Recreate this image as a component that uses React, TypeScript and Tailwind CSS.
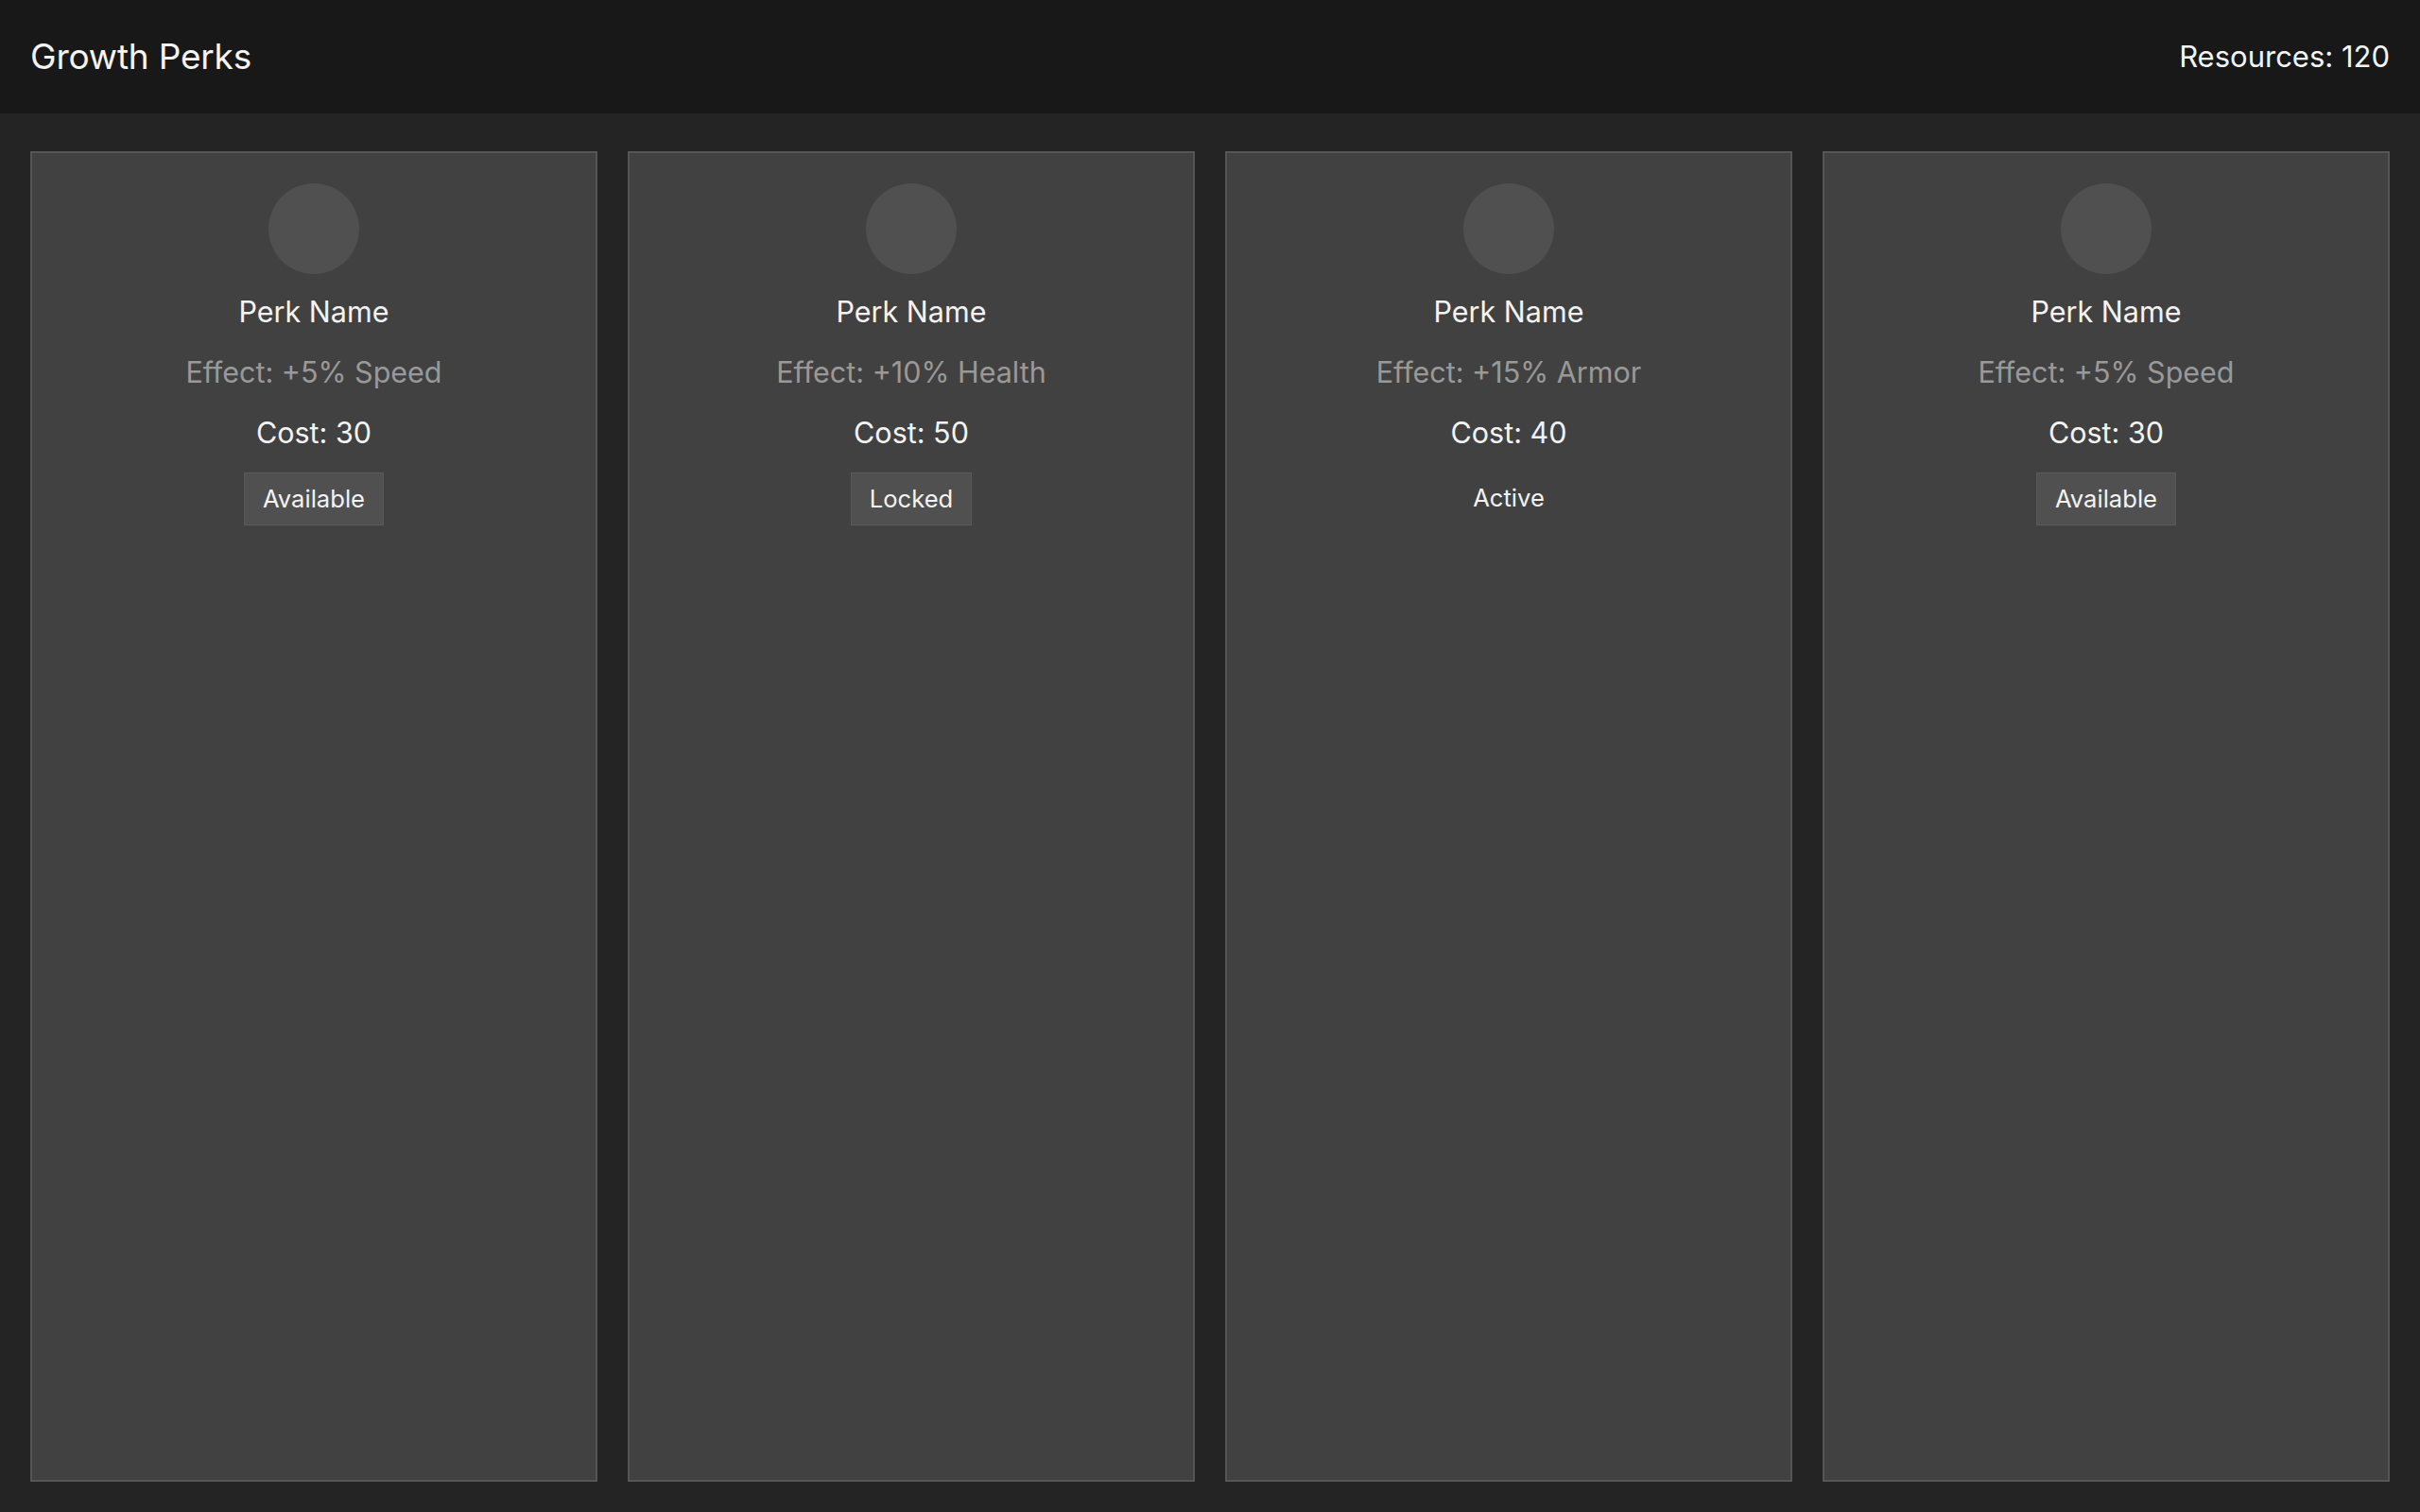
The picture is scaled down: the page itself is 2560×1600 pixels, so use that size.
import React from 'react'

type Perk = {
  effect: string
  cost: number
  status: 'Available' | 'Locked' | 'Active'
}

const perks: Perk[] = [
  { effect: '+5% Speed', cost: 30, status: 'Available' },
  { effect: '+10% Health', cost: 50, status: 'Locked' },
  { effect: '+15% Armor', cost: 40, status: 'Active' },
  { effect: '+5% Speed', cost: 30, status: 'Available' },
]

const PerkCard = ({ perk }: { perk: Perk }) => {
  return (
    <div className="flex-1 flex flex-col items-center bg-[#414141] border-2 border-[#555555] pt-8 px-8 text-center">
      <div className="w-24 h-24 rounded-full bg-[#505050] mb-[18px]" />
      <div className="flex flex-col items-center gap-[20px]">
        <h2 className="text-[30.5px] leading-[44px] text-[#f3f3f3]">Perk Name</h2>
        <p className="text-[30.5px] leading-[44px] text-[#999999]">Effect: {perk.effect}</p>
        <p className="text-[30.5px] leading-[44px] text-[#f3f3f3]">Cost: {perk.cost}</p>
        <span
          className={
            'text-[25.6px] leading-[1.5] text-[#f3f3f3] px-[19px] py-[8px] ' +
            (perk.status === 'Active' ? '' : 'bg-[#505050] border border-[#5a5a5a]')
          }
        >
          {perk.status}
        </span>
      </div>
    </div>
  )
}

const App = () => {
  return (
    <div className="min-h-screen flex flex-col bg-[#242424] font-['Inter',_'Noto_Sans',_sans-serif]">
      <header className="h-[120px] shrink-0 flex items-center justify-between px-8 bg-[#181818]">
        <h1 className="text-[37px] text-[#f5f5f5] tracking-[-0.2px]">Growth Perks</h1>
        <div className="text-[31px] text-[#f5f5f5]">Resources: 120</div>
      </header>
      <main className="flex-1 flex gap-8 px-8 pt-10 pb-8">
        {perks.map((perk, index) => (
          <PerkCard key={index} perk={perk} />
        ))}
      </main>
    </div>
  )
}

export default App
